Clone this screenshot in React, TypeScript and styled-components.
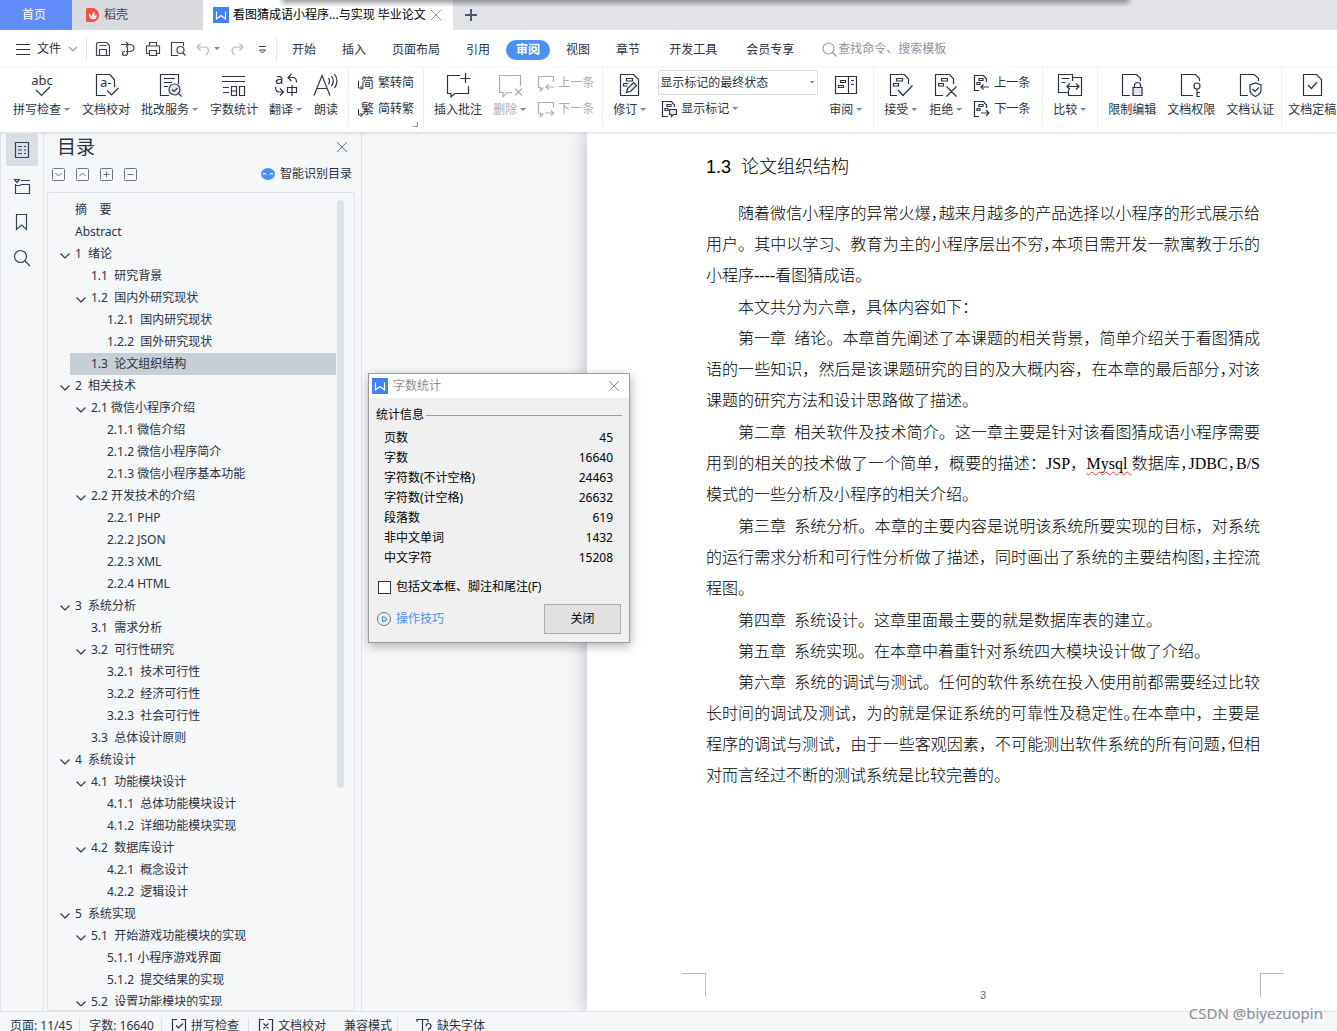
import React from "react";
import styled, { createGlobalStyle, css } from "styled-components";

const GlobalStyle = createGlobalStyle`
  *, *::before, *::after { box-sizing: border-box; }
  body {
    margin: 0;
    overflow: hidden;
    font-family: "Noto Sans", "Noto Sans CJK SC", sans-serif;
    font-size: 12px;
    line-height: 16px;
    color: #2b3245;
    background: #fff;
  }
  button, input, select { font: inherit; color: inherit; }
  h1, h2, p, ul, dl, dd { margin: 0; padding: 0; }
  ul { list-style: none; }
`;

/* ---------- shared parts ---------- */

const Shell = styled.div`
  position: relative;
  display: flex;
  flex-direction: column;
  height: 100vh;
  overflow: hidden;
`;

const Svg = styled.svg<{ $size: number }>`
  display: block;
  flex: none;
  width: ${(p) => p.$size}px;
  height: ${(p) => p.$size}px;
  fill: none;
  stroke: currentColor;
  stroke-width: 1.2;
  overflow: visible;

  text {
    fill: currentColor;
    stroke: none;
  }
`;

type IconProps = { size?: number; children: React.ReactNode };

const Icon = ({ size = 24, children }: IconProps) => (
  <Svg $size={size} viewBox={`0 0 ${size} ${size}`} aria-hidden="true">
    {children}
  </Svg>
);

const plainButton = css`
  display: flex;
  align-items: center;
  flex: none;
  padding: 0;
  border: 0;
  background: none;
  white-space: nowrap;
  cursor: pointer;
`;

const IconButton = styled.button`
  ${plainButton}
  justify-content: center;
`;

const Caret = styled.span`
  width: 7px;
  height: 4px;
  margin-left: 3px;
  background: #7f879a;
  clip-path: polygon(0 0, 6px 0, 3px 3px);
`;

const CloseGlyph = ({ size = 12 }: { size?: number }) => (
  <Icon size={size}>
    <path d={`M1 1L${size - 1} ${size - 1}M${size - 1} 1L1 ${size - 1}`} strokeWidth="1" />
  </Icon>
);

const WriterLogo = () => (
  <Icon size={16}>
    <rect width="16" height="16" fill="#3f83f3" stroke="none" />
    <path d="M3.500 4.500v7.500L8 8.500l4.500 3.500V4.500" stroke="#fff" strokeWidth="1.200" />
  </Icon>
);

/* ---------- document tabs ---------- */

const TabBar = styled.div`
  position: relative;
  display: flex;
  flex: none;
  height: 30px;
  background: #e1e3e7;

  &::after {
    content: "";
    position: absolute;
    top: 0;
    left: 278px;
    right: 204px;
    height: 7px;
    background: linear-gradient(rgba(70, 72, 78, 0.5), rgba(70, 72, 78, 0));
    mask-image: linear-gradient(90deg, transparent, #000 8px calc(100% - 8px), transparent);
  }
`;

const HomeTab = styled.button`
  ${plainButton}
  justify-content: center;
  width: 72px;
  padding-right: 4px;
  background: #628cf9;
  color: #fff;
`;

const Tab = styled.button<{ $active?: boolean }>`
  ${plainButton}
  gap: 4px;
  width: ${(p) => (p.$active ? 250 : 131)}px;
  padding-left: ${(p) => (p.$active ? 10 : 14)}px;
  background: ${(p) => (p.$active ? "#fff" : "#d9dadd")};
  color: ${(p) => (p.$active ? "#000" : "#3c4354")};

  svg:last-child:not(:first-child) {
    color: #8f99b3;
  }
`;

const NewTab = styled(IconButton)`
  width: 36px;
  color: #4c5773;
`;

/* ---------- menu row ---------- */

const MenuBar = styled.nav`
  display: flex;
  align-items: center;
  flex: none;
  height: 38px;
  padding-left: 16px;
`;

const FileMenu = styled.button`
  ${plainButton}
  gap: 7px;
`;

const Divider = styled.span<{ $space: number }>`
  width: 1px;
  height: 24px;
  margin: 0 ${(p) => p.$space}px;
  background: #e4e6ea;
`;

const QuickBar = styled.div`
  display: flex;
  align-items: center;
  gap: 9px;
  color: #3c4354;
`;

const FaintGroup = styled.div`
  display: flex;
  align-items: center;
  color: #b4b7be;
`;

const MenuTabs = styled.div`
  display: flex;
  gap: 6px;
  padding-top: 1px;
`;

const MenuTab = styled.button<{ $active?: boolean; $wide?: boolean }>`
  ${plainButton}
  height: 20px;
  padding: 0 ${(p) => (p.$wide ? 13 : 10)}px;
  border-radius: 10px;
  ${(p) =>
    p.$active &&
    css`
      background: #4a90f5;
      color: #fff;
      font-weight: 700;
    `}
`;

const Search = styled.label`
  display: flex;
  align-items: center;
  gap: 1px;
  margin-left: 18px;
  color: #99a0b2;

  input {
    width: 160px;
    padding: 0;
    border: 0;
    outline: 0;
    background: none;
  }

  input::placeholder {
    color: #8a92a6;
    opacity: 1;
  }
`;

/* ---------- ribbon ---------- */

const Ribbon = styled.div`
  position: relative;
  z-index: 1;
  display: flex;
  flex: none;
  height: 64px;
  background: #fff;
  box-shadow: 0 1px 4px rgba(0, 0, 0, 0.14);
`;

const Group = styled.div<{ $start?: number; $end?: number; $last?: boolean }>`
  position: relative;
  display: flex;
  align-items: flex-start;
  flex: none;
  gap: 11px;
  height: 62px;
  padding: 5px ${(p) => p.$end ?? 10}px 0 ${(p) => p.$start ?? 10}px;
  border-right: ${(p) => (p.$last ? 0 : 1)}px solid #eceef1;
`;

const BigButton = styled.button<{ $off?: boolean }>`
  ${plainButton}
  flex-direction: column;
  gap: 5px;
  color: ${(p) => (p.$off ? "#abadb2" : "#2b3245")};
`;

const Label = styled.span`
  display: flex;
  align-items: center;
`;

const Stack = styled.div<{ $off?: boolean }>`
  display: flex;
  flex-direction: column;
  gap: 8px;
  padding-top: 1px;
  color: ${(p) => (p.$off ? "#abadb2" : "#2b3245")};
`;

const SmallButton = styled.button<{ $indent?: boolean }>`
  ${plainButton}
  gap: 4px;
  height: 18px;
  padding-left: ${(p) => (p.$indent ? 3 : 0)}px;
  color: inherit;
`;

const ViewStack = styled.div`
  display: flex;
  flex-direction: column;
  gap: 5px;
  margin-top: -3px;
`;

const SelectBox = styled.label`
  position: relative;
  display: flex;
  align-items: center;

  select {
    width: 160px;
    height: 25px;
    padding: 0 16px 0 1px;
    border: 1px solid #d9dce1;
    border-radius: 2px;
    background: #fff;
    appearance: none;
  }

  ${Caret} {
    position: absolute;
    right: 2px;
  }
`;

const Corner = styled.span`
  position: absolute;
  right: 5px;
  bottom: 3px;
  width: 5px;
  height: 5px;
  border: solid #8a92a6;
  border-width: 0 1px 1px 0;
`;

const icons = {
  spell: (
    <Icon>
      <text x="12" y="12" textAnchor="middle" fontSize="13">abc</text>
      <path d="M6 17l5.500 5.500L20 14" />
    </Icon>
  ),
  proof: (
    <Icon>
      <path d="M20.500 14V7L16 1.500H2.500V22.500H12M13 17.500l4.500 4.500 7-7" />
      <text x="6" y="14" fontSize="13">a-</text>
    </Icon>
  ),
  correct: (
    <Icon>
      <path d="M20.500 11V1.500H2.500V22.500H11M6 5.500h11M6 9.500h8M6 13.500h4" />
      <circle cx="16.500" cy="16.500" r="5.500" fill="#e4e8ee" />
      <path d="M14 16.500l2 2 3.500-3.500M20.500 20.500l3 3" />
    </Icon>
  ),
  count: (
    <Icon>
      <path d="M0 3.500h23M0 8.500h23M1 14.500h6M1 19.500h6M9.500 13.500h5v9h-5zM9.500 18h5M17.500 13.500h5v9h-5z" />
    </Icon>
  ),
  translate: (
    <Icon>
      <text x="1" y="11" fontSize="15">a</text>
      <path d="M14 4.500h5q3.500 0 3.500 5M17.500 1L14 4.500 17.500 8M1.500 14q0 5 4 5H9M6 15.500L9.500 19 6 22.500M13.500 14.500h9v5h-9zM18 12v11" />
    </Icon>
  ),
  read: (
    <Icon>
      <path d="M0 22.500L8 2.500l8 20M3 15.500h10M14.500 5q2 3 0 6.500M17.500 3q3.500 5 0 10M20.500 1q5 7 0 14" />
    </Icon>
  ),
  note: (
    <Icon>
      <path d="M14 2.500H1.500v18H5v3.500l4-3.500h13.500V13M19.500 0v10M14.500 5.500h10" />
    </Icon>
  ),
  deleteNote: (
    <Icon>
      <path d="M22.500 13V2.500H1.500v17H5v4l4-4h5M17 15.500l7 7M24 15.500l-7 7" />
    </Icon>
  ),
  revise: (
    <Icon>
      <path d="M15.500 1.500H2.500v21h18v-16zM8.500 5.500h6V8h-6zM5.500 10.500h5M5.500 10.500v2.500h4" />
      <path d="M8.500 19.500l1-4 6-6 3 3-6 6z" fill="#e4e8ee" />
    </Icon>
  ),
  pane: (
    <Icon>
      <path d="M1.500 3.500h21v17h-21zM14.500 3.500v17M17 7.500h3M17 11.500h3M6.500 7.500h5v2h-5zM4.500 12.500h5v2h-5z" />
    </Icon>
  ),
  accept: (
    <Icon>
      <path d="M19.500 11V6L15.500 1.500H1.500v21H8M7.500 5.500h6V8h-6zM4.500 10.500h5V13h-5zM9 17l5 5.500 9.500-10" />
    </Icon>
  ),
  reject: (
    <Icon>
      <path d="M19.500 11V6L15.500 1.500H1.500v21H9M7.500 5.500h6V8h-6zM4.500 10.500h5V13h-5zM12.500 13.500l10 10M22.500 13.500l-10 10" />
    </Icon>
  ),
  compare: (
    <Icon>
      <path d="M10.500 16.500V22.500H23.500V4.500H14.500M14.500 8V1.500H.5v18h10M3.500 5.500h8M3.500 9.500h4M9 13.500h12M12 10.500l-3 3 3 3M18 10.500l3 3-3 3" />
    </Icon>
  ),
  lock: (
    <Icon>
      <path d="M20.500 8V5.500l-4-4H2.500v21H10" />
      <path d="M13 14.500h9v8h-9z" fill="#e4e8ee" />
      <path d="M14.500 14.500v-2q0-3 3-3t3 3v2" />
    </Icon>
  ),
  key: (
    <Icon>
      <path d="M20.500 8V5.500l-4-4H2.500v21H14M18 16v8M18 19.500h3M18 23.500h3" />
      <circle cx="18" cy="13" r="3" />
    </Icon>
  ),
  shield: (
    <Icon>
      <path d="M20.500 8V5.500l-4-4H2.500v21H10M17.500 10l5.500 2v5q0 4-5.500 6.500Q12 21 12 17v-5zM14.500 16l2.500 2.500 4-4" />
    </Icon>
  ),
  final: (
    <Icon>
      <path d="M16.500 1.500H3.500v21h18v-16zM8 12l3.500 3.500L17 9" />
    </Icon>
  ),
};

const ToSimple = (
  <Icon size={16}>
    <text x="3" y="12" fontSize="13">简</text>
    <path d="M.5 6v7h4M2.500 11l2 2-2 2" strokeWidth="1" />
  </Icon>
);
const ToTraditional = (
  <Icon size={16}>
    <text x="3" y="12" fontSize="13">繁</text>
    <path d="M.5 8v6h4M2.500 12l2 2-2 2" strokeWidth="1" />
  </Icon>
);
const PrevNote = (
  <Icon size={16}>
    <path d="M15.500 7V1.500H.5v11H2.500v3l3-3M8 12h8M10.500 9.500L8 12l2.500 2.500" />
  </Icon>
);
const NextNote = (
  <Icon size={16}>
    <path d="M15.500 7V1.500H.5v11H2.500v3l3-3M7 12h8.500M13 9.500l2.500 2.500-2.500 2.500" />
  </Icon>
);
const MarkIcon = (
  <Icon size={16}>
    <path d="M13.500 6V4l-3-3.500H1.500v15H7M6 3.500h4v2H6zM4 7.500h3v2H4z" />
    <path d="M8.500 8.500h7v5h-3l-2 2v-2h-2z" fill="#e4e8ee" />
  </Icon>
);
const PrevChange = (
  <Icon size={16}>
    <path d="M12.500 7V4l-3-3.500H.5v15H5M5 3.500h4v2H5zM3 7.500h3v2H3zM7 12h8M9.500 9.500L7 12l2.500 2.500" />
  </Icon>
);
const NextChange = (
  <Icon size={16}>
    <path d="M12.500 7V4l-3-3.500H.5v15H5M5 3.500h4v2H5zM3 7.500h3v2H3zM7 12h8M12 9l3 3-3 3" />
  </Icon>
);

type BigProps = { icon: keyof typeof icons; text: string; caret?: boolean; off?: boolean };

const Big = ({ icon, text, caret, off }: BigProps) => (
  <BigButton $off={off} disabled={off}>
    {icons[icon]}
    <Label>
      {text}
      {caret && <Caret />}
    </Label>
  </BigButton>
);

/* ---------- work area ---------- */

const Work = styled.main`
  display: flex;
  flex: 1;
  min-height: 0;
  background: #f5f7f9;
`;

const Rail = styled.div`
  display: flex;
  flex-direction: column;
  flex: none;
  gap: 4px;
  width: 44px;
  padding: 2px 5px;
  border: solid #e0e3e9;
  border-width: 0 1px;
`;

const RailButton = styled(IconButton)<{ $active?: boolean }>`
  height: 32px;
  border-radius: 2px;
  background: ${(p) => (p.$active ? "#dadee5" : "none")};
  color: #36415c;
`;

const Outline = styled.aside`
  display: flex;
  flex-direction: column;
  flex: none;
  width: 318px;
  padding: 0 6px 0 3px;
  border-right: 1px solid #e0e3e9;
`;

const OutlineHead = styled.div`
  display: flex;
  align-items: center;
  justify-content: space-between;
  height: 30px;
  padding: 0 7px 0 10px;
  color: #6a7285;

  h2 {
    font-size: 19px;
    font-weight: 400;
    color: #2b3245;
  }
`;

const OutlineTools = styled.div`
  display: flex;
  align-items: center;
  gap: 11px;
  height: 24px;
  padding: 0 3px 0 5px;
  color: #70757f;
`;

const SmartButton = styled.button`
  ${plainButton}
  gap: 5px;
  margin-left: auto;
  color: #2b3245;
`;

const TreeBox = styled.div`
  display: flex;
  flex: 1;
  min-height: 0;
  margin-top: 6px;
  padding: 6px 10px 4px 11px;
  border: 1px solid #dfe2e8;
  border-radius: 2px;
`;

const Tree = styled.ul`
  flex: 1;
  overflow: hidden;
`;

const TreeRow = styled.li<{ $level: number; $active?: boolean }>`
  display: flex;
  align-items: center;
  height: 22px;
  padding-left: ${(p) => p.$level * 16}px;
  background: ${(p) => (p.$active ? "linear-gradient(#c6ced6, #c6ced6) 11px 0 no-repeat" : "none")};
  white-space: pre;
`;

const Twisty = styled.span`
  flex: none;
  width: 16px;
  padding-left: 1px;
  margin-top: 3px;
`;

const ScrollThumb = styled.div`
  flex: none;
  width: 7px;
  height: 588px;
  margin: 1px 0 0 1px;
  border-radius: 4px;
  background: #dfe2e4;
`;

const Canvas = styled.section`
  display: flex;
  flex: 1;
  min-width: 0;
  overflow: hidden;
  padding-left: 225px;
`;

const Sheet = styled.article`
  display: flex;
  flex-direction: column;
  flex: none;
  width: 793px;
  padding: 23px 120px 10px 119px;
  background: #fff;
  box-shadow: 0 0 18px rgba(60, 66, 76, 0.34);
  color: #000;
  font-family: "Liberation Serif", "Noto Sans CJK SC", serif;
  font-size: 16px;
  font-weight: 300;
  line-height: 31px;

  h1 {
    margin-bottom: 19px;
    font-family: "Liberation Sans", "Noto Sans CJK SC", sans-serif;
    font-size: 18px;
    font-weight: 300;
    line-height: 24px;
    white-space: pre;
  }
`;

const Paragraph = styled.p<{ $long?: boolean }>`
  margin-bottom: ${(p) => (p.$long ? 1 : 0)}px;
`;

const Line = styled.span<{ $first?: boolean; $full?: boolean }>`
  display: block;
  height: 31px;
  padding-left: ${(p) => (p.$first ? 32 : 0)}px;
  white-space: pre-wrap;
  text-align-last: ${(p) => (p.$full ? "justify" : "left")};
`;

const HalfMark = styled.span`
  font-feature-settings: "halt";
`;

const Misspelt = styled.span`
  text-decoration: underline wavy #e0433a 1px;
  text-decoration-skip-ink: none;
  text-underline-offset: 2px;
`;

const SheetFooter = styled.footer`
  display: flex;
  align-items: flex-end;
  justify-content: space-between;
  height: 28px;
  margin: auto -24px 0;
  color: #666;
  font-family: "Liberation Sans", sans-serif;
  font-size: 11px;
  line-height: 12px;
`;

const CropMark = styled.span<{ $side: "left" | "right" }>`
  align-self: flex-start;
  width: 24px;
  height: 24px;
  border: solid #b9b9b9;
  border-width: ${(p) => (p.$side === "left" ? "1px 1px 0 0" : "1px 0 0 1px")};
`;

/* ---------- word count window ---------- */

const Dialog = styled.div`
  position: absolute;
  z-index: 2;
  top: 373px;
  left: 368px;
  width: 262px;
  border: 1px solid #9a9c9f;
  background: #f0f0f0;
  box-shadow: 1px 3px 10px rgba(0, 0, 0, 0.3);
  color: #000;
`;

const DialogTitle = styled.div`
  display: flex;
  align-items: center;
  gap: 5px;
  height: 24px;
  padding: 0 9px 0 3px;
  background: #fff;
  color: #8f8f8f;

  button {
    margin-left: auto;
  }
`;

const DialogBody = styled.div`
  padding: 9px 7px 8px;
`;

const Legend = styled.div`
  display: flex;
  align-items: center;
  gap: 2px;

  &::after {
    content: "";
    flex: 1;
    height: 1px;
    background: #9d9d9d;
  }
`;

const Stats = styled.table`
  width: 100%;
  margin: 5px 0 9px;
  border-spacing: 0;

  th,
  td {
    height: 20px;
    padding: 0 9px 0 8px;
    font-weight: 400;
    text-align: left;
  }

  td {
    text-align: right;
  }
`;

const CheckRow = styled.label`
  display: flex;
  align-items: center;
  gap: 5px;
  height: 20px;
  padding-left: 2px;

  input {
    width: 13px;
    height: 13px;
    margin: 0;
    border: 1px solid #333;
    background: #fff;
    appearance: none;
  }
`;

const DialogFoot = styled.div`
  display: flex;
  align-items: center;
  justify-content: space-between;
  margin-top: 7px;
  padding: 0 1px;
`;

const TipLink = styled.a`
  display: flex;
  align-items: center;
  gap: 5px;
  color: #4a90f0;
  text-decoration: none;
`;

const CloseButton = styled.button`
  ${plainButton}
  justify-content: center;
  width: 77px;
  height: 30px;
  border: 1px solid #adadad;
  background: #e1e1e1;
`;

/* ---------- status bar ---------- */

const Status = styled.footer`
  flex: none;
  height: 20px;
  overflow: hidden;
  border-top: 1px solid #e0e3e9;
  background: #f5f7f9;
`;

const StatusRow = styled.div`
  display: flex;
  align-items: center;
  height: 28px;
  padding-left: 10px;
`;

const StatusItem = styled.button<{ $start?: number; $end?: number; $line?: boolean }>`
  ${plainButton}
  gap: 4px;
  height: 16px;
  padding: 0 ${(p) => p.$end ?? 9}px 0 ${(p) => p.$start ?? 0}px;
  margin-right: 9px;
  border-right: ${(p) => (p.$line ? 1 : 0)}px solid #dde0e6;
  line-height: 10px;
`;

const Watermark = styled.div`
  position: absolute;
  z-index: 3;
  right: 14px;
  bottom: 8px;
  color: #8b8d91;
  font-family: "Noto Sans", sans-serif;
  font-size: 15px;
  line-height: 20px;
`;

/* ---------- data ---------- */

type Node = [level: number, text: string, open?: boolean];

const outline: Node[] = [
  [0, "摘    要"],
  [0, "Abstract"],
  [0, "1  绪论", true],
  [1, "1.1  研究背景"],
  [1, "1.2  国内外研究现状", true],
  [2, "1.2.1  国内研究现状"],
  [2, "1.2.2  国外研究现状"],
  [1, "1.3  论文组织结构"],
  [0, "2  相关技术", true],
  [1, "2.1 微信小程序介绍", true],
  [2, "2.1.1 微信介绍"],
  [2, "2.1.2 微信小程序简介"],
  [2, "2.1.3 微信小程序基本功能"],
  [1, "2.2 开发技术的介绍", true],
  [2, "2.2.1 PHP"],
  [2, "2.2.2 JSON"],
  [2, "2.2.3 XML"],
  [2, "2.2.4 HTML"],
  [0, "3  系统分析", true],
  [1, "3.1  需求分析"],
  [1, "3.2  可行性研究", true],
  [2, "3.2.1  技术可行性"],
  [2, "3.2.2  经济可行性"],
  [2, "3.2.3  社会可行性"],
  [1, "3.3  总体设计原则"],
  [0, "4  系统设计", true],
  [1, "4.1  功能模块设计", true],
  [2, "4.1.1  总体功能模块设计"],
  [2, "4.1.2  详细功能模块实现"],
  [1, "4.2  数据库设计", true],
  [2, "4.2.1  概念设计"],
  [2, "4.2.2  逻辑设计"],
  [0, "5  系统实现", true],
  [1, "5.1  开始游戏功能模块的实现", true],
  [2, "5.1.1 小程序游戏界面"],
  [2, "5.1.2  提交结果的实现"],
  [1, "5.2  设置功能模块的实现", true],
];

const H = ({ children }: { children: string }) => <HalfMark>{children}</HalfMark>;

const paragraphs: React.ReactNode[][] = [
  [
    <>随着微信小程序的异常火爆<H>，</H>越来月越多的产品选择以小程序的形式展示给</>,
    <>用户。其中以学习、教育为主的小程序层出不穷<H>，</H>本项目需开发一款寓教于乐的</>,
    "小程序----看图猜成语。",
  ],
  ["本文共分为六章，具体内容如下："],
  [
    "第一章  绪论。本章首先阐述了本课题的相关背景，简单介绍关于看图猜成",
    <>语的一些知识，然后是该课题研究的目的及大概内容，在本章的最后部分<H>，</H>对该</>,
    "课题的研究方法和设计思路做了描述。",
  ],
  [
    "第二章  相关软件及技术简介。这一章主要是针对该看图猜成语小程序需要",
    <>
      用到的相关的技术做了一个简单，概要的描述：JSP，<Misspelt>Mysql </Misspelt>
      数据库<H>，</H>JDBC<H>，</H>B/S
    </>,
    "模式的一些分析及小程序的相关介绍。",
  ],
  [
    "第三章  系统分析。本章的主要内容是说明该系统所要实现的目标，对系统",
    <>的运行需求分析和可行性分析做了描述，同时画出了系统的主要结构图<H>，</H>主控流</>,
    "程图。",
  ],
  ["第四章  系统设计。这章里面最主要的就是数据库表的建立。"],
  ["第五章  系统实现。在本章中着重针对系统四大模块设计做了介绍。"],
  [
    "第六章  系统的调试与测试。任何的软件系统在投入使用前都需要经过比较",
    <>长时间的调试及测试，为的就是保证系统的可靠性及稳定性<H>。</H>在本章中，主要是</>,
    <>程序的调试与测试，由于一些客观因素，不可能测出软件系统的所有问题<H>，</H>但相</>,
    "对而言经过不断的测试系统是比较完善的。",
  ],
];

const stats: [string, string][] = [
  ["页数", "45"],
  ["字数", "16640"],
  ["字符数(不计空格)", "24463"],
  ["字符数(计空格)", "26632"],
  ["段落数", "619"],
  ["非中文单词", "1432"],
  ["中文字符", "15208"],
];

const squareTools = [
  ["全部展开", "M3.500 5l3 3 3-3"],
  ["全部折叠", "M3.500 8l3-3 3 3"],
  ["提升级别", "M3.500 6.500h6M6.500 3.500v6"],
  ["降低级别", "M3.500 6.500h6"],
];

/* ---------- page ---------- */

export default function App() {
  return (
    <Shell>
      <GlobalStyle />

      <TabBar>
        <HomeTab>首页</HomeTab>
        <Tab>
          <Icon size={14}>
            <path d="M1.500 0H6a7 7 0 0 1 0 14H1.500Q0 14 0 12.500v-11Q0 0 1.500 0z" fill="#ee5146" stroke="none" />
            <path d="M6.500 11.500Q2.500 9.500 3 5.500q2.500 1 3.500 6zM6.500 11.500Q5 7 8 3.500q2 4-1.500 8zM6.800 11.500Q11 11 10.800 7q-3 .5-4 4.500z" fill="#fff" stroke="none" />
          </Icon>
          稻壳
        </Tab>
        <Tab $active>
          <WriterLogo />
          看图猜成语小程序...与实现 毕业论文
          <CloseGlyph />
        </Tab>
        <NewTab aria-label="新建标签">
          <Icon size={12}>
            <path d="M6 0v12M0 6h12" strokeWidth="2" />
          </Icon>
        </NewTab>
      </TabBar>

      <MenuBar>
        <FileMenu>
          <Icon size={14}>
            <path d="M0 2.500h14M0 7.500h14M0 12.500h14" strokeWidth="1" />
          </Icon>
          文件
          <Icon size={10}>
            <path d="M1 3l4 4 4-4" stroke="#9aa1b1" />
          </Icon>
        </FileMenu>
        <Divider $space={8} />
        <QuickBar>
          <IconButton aria-label="保存">
            <Icon size={16}>
              <path d="M1.500 14.500v-12l1-1h9l3 3v10zM4.500 4.500h7M4.500 14.500v-6h7v6" />
            </Icon>
          </IconButton>
          <IconButton aria-label="输出为PDF">
            <Icon size={16}>
              <path d="M1 3.500h8q5 0 5 3.500t-5 3.500H6M6 1l2.500 2.500L6 6M7.500 6v6q0 2.500-2.500 2.500T2.500 12.500 5 10.500" />
            </Icon>
          </IconButton>
          <IconButton aria-label="打印">
            <Icon size={16}>
              <path d="M4.500 5V1.500h7V5M4.500 12.500h-3V5h13v7.500h-3M4.500 9.500h7v5h-7z" />
            </Icon>
          </IconButton>
          <IconButton aria-label="打印预览">
            <Icon size={16}>
              <path d="M13.500 5V1.500h-12v13H8M13 12l2.500 2.500" />
              <circle cx="10.500" cy="9" r="3.500" />
            </Icon>
          </IconButton>
          <FaintGroup>
            <IconButton aria-label="撤销">
              <Icon size={16}>
                <path d="M5.500 2.500L2 6l3.500 3.500M2 6h7.500q4 0 4 4 0 2-2.500 4" />
              </Icon>
            </IconButton>
            <Caret />
          </FaintGroup>
          <FaintGroup>
            <IconButton aria-label="恢复">
              <Icon size={16}>
                <path d="M9.500 2.500L13 6 9.500 9.500M13 6H6q-4 0-4 4 0 2 2.500 4" />
              </Icon>
            </IconButton>
          </FaintGroup>
          <IconButton aria-label="自定义快速访问工具栏">
            <Icon size={16}>
              <path d="M4 5.500h7M4.500 9l3 3 3-3z" strokeWidth="1" />
            </Icon>
          </IconButton>
        </QuickBar>
        <Divider $space={5} />
        <MenuTabs>
          <MenuTab>开始</MenuTab>
          <MenuTab>插入</MenuTab>
          <MenuTab>页面布局</MenuTab>
          <MenuTab>引用</MenuTab>
          <MenuTab $active>审阅</MenuTab>
          <MenuTab>视图</MenuTab>
          <MenuTab>章节</MenuTab>
          <MenuTab $wide>开发工具</MenuTab>
          <MenuTab>会员专享</MenuTab>
        </MenuTabs>
        <Search>
          <Icon size={15}>
            <circle cx="6.500" cy="6.500" r="5.500" />
            <path d="M10.500 10.500l4 4" />
          </Icon>
          <input type="text" aria-label="查找" placeholder="查找命令、搜索模板" />
        </Search>
      </MenuBar>

      <Ribbon>
        <Group $start={13}>
          <Big icon="spell" text="拼写检查" caret />
          <Big icon="proof" text="文档校对" />
          <Big icon="correct" text="批改服务" caret />
          <Big icon="count" text="字数统计" />
          <Big icon="translate" text="翻译" caret />
          <Big icon="read" text="朗读" />
        </Group>
        <Group $start={9} $end={9}>
          <Stack>
            <SmallButton>{ToSimple}繁转简</SmallButton>
            <SmallButton>{ToTraditional}简转繁</SmallButton>
          </Stack>
          <Corner />
        </Group>
        <Group $end={8}>
          <Big icon="note" text="插入批注" />
          <Big icon="deleteNote" text="删除" caret off />
          <Stack $off>
            <SmallButton disabled>{PrevNote}上一条</SmallButton>
            <SmallButton disabled>{NextNote}下一条</SmallButton>
          </Stack>
        </Group>
        <Group>
          <Big icon="revise" text="修订" caret />
          <ViewStack>
            <SelectBox>
              <select aria-label="显示状态" defaultValue="final">
                <option value="final">显示标记的最终状态</option>
              </select>
              <Caret />
            </SelectBox>
            <SmallButton $indent>
              {MarkIcon}
              <Label>
                显示标记
                <Caret />
              </Label>
            </SmallButton>
          </ViewStack>
          <Big icon="pane" text="审阅" caret />
        </Group>
        <Group $end={12}>
          <Big icon="accept" text="接受" caret />
          <Big icon="reject" text="拒绝" caret />
          <Stack>
            <SmallButton>{PrevChange}上一条</SmallButton>
            <SmallButton>{NextChange}下一条</SmallButton>
          </Stack>
        </Group>
        <Group>
          <Big icon="compare" text="比较" caret />
        </Group>
        <Group $end={7}>
          <Big icon="lock" text="限制编辑" />
          <Big icon="key" text="文档权限" />
          <Big icon="shield" text="文档认证" />
        </Group>
        <Group $start={6} $end={0} $last>
          <Big icon="final" text="文档定稿" />
        </Group>
      </Ribbon>

      <Work>
        <Rail>
          <RailButton $active aria-label="目录">
            <Icon size={16}>
              <path d="M1.500 .5h13v15h-13zM4 4.500h4M10 4.500h2M4 8h4M10 8h2M4 11.500h4M10 11.500h2" />
            </Icon>
          </RailButton>
          <RailButton aria-label="章节">
            <Icon size={16}>
              <path d="M.5 1.500h5L3 4.500zM7 2.500h9M1.500 6v9.500h14v-9h-8l-2 1h-4" />
            </Icon>
          </RailButton>
          <RailButton aria-label="书签">
            <Icon size={16}>
              <path d="M2.500 .5h10v15l-5-4.500-5 4.500z" />
            </Icon>
          </RailButton>
          <RailButton aria-label="查找">
            <Icon size={16}>
              <circle cx="6.500" cy="6.500" r="6" />
              <path d="M11 11l5 5" />
            </Icon>
          </RailButton>
        </Rail>

        <Outline>
          <OutlineHead>
            <h2>目录</h2>
            <IconButton aria-label="关闭目录">
              <CloseGlyph />
            </IconButton>
          </OutlineHead>
          <OutlineTools>
            {squareTools.map(([name, path]) => (
              <IconButton key={name} aria-label={name}>
                <Icon size={13}>
                  <rect x=".5" y=".5" width="12" height="12" rx="1" strokeWidth="1" />
                  <path d={path} strokeWidth="1" />
                </Icon>
              </IconButton>
            ))}
            <SmartButton>
              <Icon size={14}>
                <ellipse cx="7" cy="7" rx="7" ry="6" fill="#4a90f5" stroke="none" />
                <path d="M2 7.500q1.500-2 3 0M9 7.500q1.500-2 3 0" stroke="#fff" />
              </Icon>
              智能识别目录
            </SmartButton>
          </OutlineTools>
          <TreeBox>
            <Tree>
              {outline.map(([level, text, open]) => (
                <TreeRow key={text} $level={level} $active={text.startsWith("1.3")}>
                  <Twisty>
                    {open && (
                      <Icon size={10}>
                        <path d="M.5 2.500L5 7l4.500-4.500" />
                      </Icon>
                    )}
                  </Twisty>
                  {text}
                </TreeRow>
              ))}
            </Tree>
            <ScrollThumb />
          </TreeBox>
        </Outline>

        <Canvas>
          <Sheet>
            <h1>1.3  论文组织结构</h1>
            {paragraphs.map((lines, i) => (
              <Paragraph key={i} $long={lines.length > 1}>
                {lines.map((line, j) => (
                  <Line key={j} $first={j === 0} $full={j < lines.length - 1}>
                    {line}
                  </Line>
                ))}
              </Paragraph>
            ))}
            <SheetFooter>
              <CropMark $side="left" />
              3
              <CropMark $side="right" />
            </SheetFooter>
          </Sheet>
        </Canvas>
      </Work>

      <Status>
        <StatusRow>
          <StatusItem $end={7} $line>页面: 11/45</StatusItem>
          <StatusItem $end={7} $line>字数: 16640</StatusItem>
          <StatusItem $line>
            <Icon size={16}>
              <path d="M6 1.500H1.500v13h13v-13H10M5 7.500l2.500 2.500L12 5.500" />
            </Icon>
            拼写检查
          </StatusItem>
          <StatusItem>
            <Icon size={16}>
              <path d="M6 1.500H1.500v13h13v-13H10M5.500 5.500l5 5M10.500 5.500l-5 5" />
            </Icon>
            文档校对
          </StatusItem>
          <StatusItem $end={5} $line>兼容模式</StatusItem>
          <StatusItem $start={10}>
            <Icon size={16}>
              <path d="M0 4V1.500h11V4M5.500 1.500v13M9 8q0-2.500 2.500-2.500T14 8t-2.500 3v1.500M11.500 14v1" />
            </Icon>
            缺失字体
          </StatusItem>
        </StatusRow>
      </Status>

      <Dialog role="dialog" aria-label="字数统计">
        <DialogTitle>
          <WriterLogo />
          字数统计
          <IconButton aria-label="关闭窗口">
            <CloseGlyph />
          </IconButton>
        </DialogTitle>
        <DialogBody>
          <Legend>统计信息</Legend>
          <Stats>
            <tbody>
              {stats.map(([name, value]) => (
                <tr key={name}>
                  <th scope="row">{name}</th>
                  <td>{value}</td>
                </tr>
              ))}
            </tbody>
          </Stats>
          <CheckRow>
            <input type="checkbox" />
            包括文本框、脚注和尾注(F)
          </CheckRow>
          <DialogFoot>
            <TipLink href="#tips">
              <Icon size={14}>
                <circle cx="7" cy="7" r="6.500" stroke="#6b7380" strokeWidth="1" />
                <path d="M5.500 4.500v5q4.500-1 4-2.500t-4-2.500z" />
              </Icon>
              操作技巧
            </TipLink>
            <CloseButton>关闭</CloseButton>
          </DialogFoot>
        </DialogBody>
      </Dialog>

      <Watermark>CSDN @biyezuopin</Watermark>
    </Shell>
  );
}
